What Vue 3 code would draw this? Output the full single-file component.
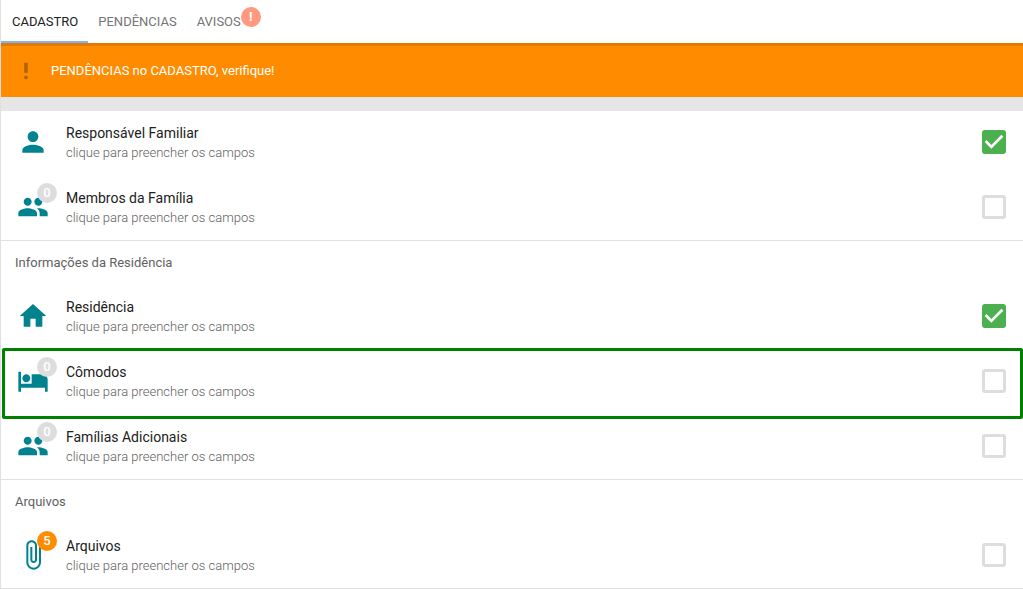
<script setup>
import { ref } from 'vue'

const tabs = [
  { id: 'cadastro', label: 'CADASTRO' },
  { id: 'pendencias', label: 'PENDÊNCIAS' },
  { id: 'avisos', label: 'AVISOS', badge: '!' },
]
const active = ref('cadastro')

const icons = {
  person: 'M12 12c2.21 0 4-1.79 4-4s-1.79-4-4-4-4 1.79-4 4 1.79 4 4 4zm0 2c-2.67 0-8 1.34-8 4v2h16v-2c0-2.66-5.33-4-8-4z',
  people: 'M16 11c1.66 0 2.99-1.34 2.99-3S17.66 5 16 5c-1.66 0-3 1.34-3 3s1.34 3 3 3zm-8 0c1.66 0 2.99-1.34 2.99-3S9.66 5 8 5C6.34 5 5 6.34 5 8s1.34 3 3 3zm0 2c-2.33 0-7 1.17-7 3.5V19h14v-2.5c0-2.33-4.67-3.5-7-3.5zm8 0c-.29 0-.62.02-.97.05 1.16.84 1.97 1.97 1.97 3.45V19h6v-2.5c0-2.33-4.67-3.5-7-3.5z',
  home: 'M10 20v-6h4v6h5v-8h3L12 3 2 12h3v8z',
  bed: 'M7 13c1.66 0 3-1.34 3-3S8.66 7 7 7s-3 1.34-3 3 1.34 3 3 3zm12-6h-8v7H3V5H1v15h2v-3h18v3h2v-9c0-2.21-1.79-4-4-4z',
  clip: 'M16.5 6v11.5c0 2.21-1.79 4-4 4s-4-1.79-4-4V5c0-1.38 1.12-2.5 2.5-2.5s2.5 1.12 2.5 2.5v10.5c0 .55-.45 1-1 1s-1-.45-1-1V6H10v9.5c0 1.38 1.12 2.5 2.5 2.5s2.5-1.12 2.5-2.5V5c0-2.21-1.79-4-4-4S7 2.79 7 5v12.5c0 3.04 2.46 5.5 5.5 5.5s5.5-2.46 5.5-5.5V6h-1.5z',
}

const groups = ref([
  {
    id: 'familia',
    items: [
      { id: 'responsavel', title: 'Responsável Familiar', icon: 'person', done: true },
      { id: 'membros', title: 'Membros da Família', icon: 'people', count: 0, done: false },
    ],
  },
  {
    id: 'residencia',
    title: 'Informações da Residência',
    items: [
      { id: 'casa', title: 'Residência', icon: 'home', done: true },
      { id: 'comodos', title: 'Cômodos', icon: 'bed', count: 0, done: false, highlight: true },
      { id: 'adicionais', title: 'Famílias Adicionais', icon: 'people', count: 0, done: false },
    ],
  },
  {
    id: 'docs',
    title: 'Arquivos',
    items: [{ id: 'arquivos', title: 'Arquivos', icon: 'clip', count: 5, done: false }],
  },
])
</script>

<template>
  <main class="page">
    <nav class="tabs">
      <button
        v-for="tab in tabs"
        :key="tab.id"
        type="button"
        class="tab"
        :class="{ active: active === tab.id }"
        @click="active = tab.id"
      >
        <span class="tab-label">{{ tab.label }}<span v-if="tab.badge" class="tab-badge">{{ tab.badge }}</span></span>
      </button>
    </nav>

    <div class="alert" role="alert">
      <svg class="alert-icon" viewBox="0 0 24 24" aria-hidden="true">
        <path d="M10 3h4v11h-4z" />
        <circle cx="12" cy="19" r="2" />
      </svg>
      <span>PENDÊNCIAS no CADASTRO, verifique!</span>
    </div>

    <section v-for="group in groups" :key="group.id" class="group">
      <h2 v-if="group.title" class="group-title">{{ group.title }}</h2>
      <ul class="rows">
        <li v-for="item in group.items" :key="item.id" class="row" :class="{ highlight: item.highlight }">
          <span class="icon-box">
            <svg class="icon" viewBox="0 0 24 24" aria-hidden="true"><path :d="icons[item.icon]" /></svg>
            <span v-if="item.count !== undefined" class="badge" :class="{ filled: item.count > 0 }">{{ item.count }}</span>
          </span>
          <label class="text" :for="item.id">
            <span class="title">{{ item.title }}</span>
            <span class="hint">clique para preencher os campos</span>
          </label>
          <span class="check">
            <input :id="item.id" v-model="item.done" type="checkbox" />
            <svg v-if="item.done" class="tick" viewBox="3 3 18 18" aria-hidden="true">
              <path d="M10 17l-5-5 1.410-1.410L10 14.170l7.590-7.590L19 8z" />
            </svg>
          </span>
        </li>
      </ul>
    </section>
  </main>
</template>

<style>
body {
  background: #fff;
}
</style>

<style scoped>
.page {
  border-left: 1px solid #e0e0e0;
  font-family: Roboto, "Liberation Sans", sans-serif;
  color: #212121;
}
.tabs {
  display: flex;
  height: 43px;
}
.tab {
  border: 0;
  border-bottom: 2px solid transparent;
  padding: 2px 10px 0;
  background: none;
  font: 400 13px/16px Roboto, "Liberation Sans", sans-serif;
  color: #757575;
  cursor: pointer;
}
.tab.active {
  padding: 2px 10px 0 11px;
  color: #212121;
  border-bottom-color: #82b1ff;
}
.tab-label {
  position: relative;
}
.tab-badge {
  position: absolute;
  left: 100%;
  top: -7px;
  width: 20px;
  height: 20px;
  border-radius: 50%;
  background: #ff9a80;
  color: #fff;
  font-weight: 700;
  line-height: 20px;
  text-align: center;
}
.alert {
  display: flex;
  align-items: center;
  gap: 14px;
  height: 54px;
  box-sizing: border-box;
  padding: 0 14px 2px;
  border-top: 3px solid #e07b00;
  background: #ff8c00;
  color: #fff;
  font-size: 13px;
  line-height: 16px;
}
.alert-icon {
  width: 22px;
  height: 22px;
  fill: #b36200;
}
.group {
  border-top: 1px solid #e0e0e0;
}
.alert + .group {
  border-top: 14px solid #e6e6e6;
}
.group:last-child {
  border-bottom: 1px solid #e0e0e0;
}
.group-title {
  margin: 0;
  padding: 14px 14px;
  font-size: 13px;
  font-weight: 400;
  line-height: 16px;
  color: #616161;
}
.rows {
  display: grid;
  gap: 1px;
  margin: 0;
  padding: 0;
  list-style: none;
}
.row {
  display: flex;
  align-items: center;
  height: 64px;
  box-sizing: border-box;
  padding: 0 17px 2px 16px;
}
.row.highlight {
  position: relative;
}
.row.highlight::after {
  content: "";
  position: absolute;
  inset: -2px 0 -5px 1px;
  border: 3px solid #008000;
  border-radius: 2px;
  pointer-events: none;
}
.icon-box {
  position: relative;
  width: 32px;
  height: 32px;
}
.icon {
  display: block;
  width: 32px;
  height: 32px;
  fill: #00838f;
}
.badge {
  position: absolute;
  top: -8px;
  right: -8px;
  width: 20px;
  height: 20px;
  border-radius: 50%;
  background: #ddd;
  color: #fff;
  font-size: 13px;
  font-weight: 500;
  line-height: 20px;
  text-align: center;
}
.badge.filled {
  background: #ff8c00;
}
.text {
  flex: 1;
  display: grid;
  gap: 2px;
  padding: 2px 0 0 17px;
  cursor: pointer;
}
.title {
  font-size: 14px;
  line-height: 18px;
}
.hint {
  font-size: 13px;
  font-weight: 300;
  line-height: 18px;
  color: #616161;
}
.check {
  position: relative;
  width: 24px;
  height: 24px;
}
.check input {
  appearance: none;
  display: block;
  width: 24px;
  height: 24px;
  box-sizing: border-box;
  margin: 0;
  border: 3px solid #ddd;
  border-radius: 3px;
  cursor: pointer;
}
.check input:checked {
  border-color: #4caf50;
  background: #4caf50;
}
.tick {
  position: absolute;
  inset: 0;
  fill: #fff;
  pointer-events: none;
}
</style>
